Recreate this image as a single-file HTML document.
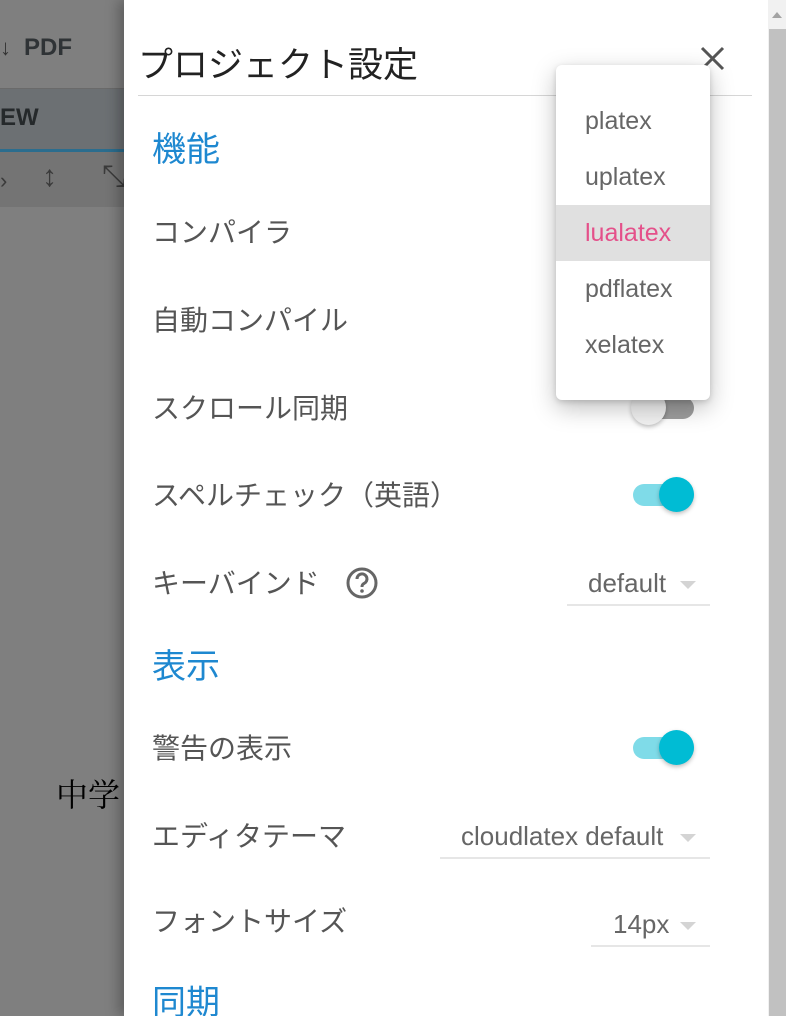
<!DOCTYPE html>
<html><head><meta charset="utf-8"><style>
*{margin:0;padding:0;box-sizing:border-box}
html,body{width:786px;height:1016px;overflow:hidden}
body{position:relative;background:#7f7f7f;font-family:"Liberation Sans","Noto Sans CJK JP",sans-serif}
.abs{position:absolute}
.panel{left:124px;top:0;width:644px;height:1016px;background:#fff;box-shadow:-6px 0 12px rgba(0,0,0,.25)}
.lbl{position:absolute;left:152px;font-size:28px;color:#555;line-height:30px;margin-top:2px}
.sec{position:absolute;left:152px;font-size:34px;color:#1e88d0;line-height:36px;margin-top:2px}
.tr{position:absolute;left:633px;width:61px;height:22px;border-radius:11px}
.kn{position:absolute;width:35px;height:35px;border-radius:50%;box-shadow:0 2px 4px rgba(0,0,0,.25)}
.sel{position:absolute;font-size:26px;color:#666;border-bottom:2px solid #e6e6e6;line-height:30px;height:38px}
.arr{position:absolute;right:14px;top:13px;width:0;height:0;border-left:8px solid transparent;border-right:8px solid transparent;border-top:8px solid #d4d4d4}
.mi{position:absolute;left:0;width:154px;height:56px;font-size:25px;color:#666;padding-left:29px;line-height:56px}
</style></head><body>
<div class="abs" style="left:0;top:0;width:124px;height:88px;background:#7f7f7f"></div>
<div class="abs" style="left:0;top:35px;font-size:22px;font-weight:bold;color:#333">↓</div>
<div class="abs" style="left:24px;top:34px;font-size:24px;font-weight:bold;color:#2f3336">PDF</div>
<div class="abs" style="left:0;top:88px;width:124px;height:62px;background:#6c7073;border-top:1px solid #6a6a6a"></div>
<div class="abs" style="left:0;top:104px;font-size:24px;font-weight:bold;color:#25292b">EW</div>
<div class="abs" style="left:0;top:149px;width:124px;height:3px;background:#2b6d8e"></div>
<div class="abs" style="left:0;top:152px;width:124px;height:55px;background:#747474"></div>
<div class="abs" style="left:0;top:168px;font-size:22px;color:#3a3a3a">›</div>
<div class="abs" style="left:42px;top:160px;font-size:30px;color:#3a3a3a">↕</div>
<div class="abs" style="left:102px;top:160px;font-size:30px;color:#3a3a3a">⤡</div>
<div class="abs" style="left:56px;top:770px;font-size:32px;color:#000;font-family:'Liberation Serif','Noto Serif CJK SC',serif">中学</div>

<div class="abs panel"></div>
<div class="abs" style="left:138px;top:37px;font-size:35px;color:#222">プロジェクト設定</div>
<svg class="abs" style="left:700px;top:46px" width="25" height="25" viewBox="0 0 25 25"><path d="M2 2L23 23M23 2L2 23" stroke="#555" stroke-width="3"/></svg>
<div class="abs" style="left:138px;top:95px;width:614px;height:1px;background:#d6d6d6"></div>

<div class="sec" style="top:130px">機能</div>
<div class="lbl" style="top:216px">コンパイラ</div>
<div class="lbl" style="top:304px">自動コンパイル</div>
<div class="lbl" style="top:392px">スクロール同期</div>
<div class="tr" style="top:397px;background:#9e9e9e"></div>
<div class="kn" style="left:631px;top:390px;background:#f1f1f1"></div>
<div class="lbl" style="top:479px">スペルチェック（英語）</div>
<div class="tr" style="top:484px;background:#7fdbe8"></div>
<div class="kn" style="left:659px;top:477px;background:#00bcd4"></div>
<div class="lbl" style="top:567px">キーバインド</div>
<svg class="abs" style="left:345px;top:566px" width="34" height="34" viewBox="0 0 34 34"><circle cx="17" cy="17" r="14" fill="none" stroke="#666" stroke-width="3"/><path d="M12 13a5 5 0 1 1 7 4.5c-1.5.8-2 1.5-2 3.5" fill="none" stroke="#666" stroke-width="3"/><circle cx="17" cy="25" r="1.8" fill="#666"/></svg>
<div class="sel" style="left:567px;top:568px;width:143px;padding-left:21px">default<div class="arr"></div></div>
<div class="sec" style="top:647px">表示</div>
<div class="lbl" style="top:732px">警告の表示</div>
<div class="tr" style="top:737px;background:#7fdbe8"></div>
<div class="kn" style="left:659px;top:730px;background:#00bcd4"></div>
<div class="lbl" style="top:820px">エディタテーマ</div>
<div class="sel" style="left:440px;top:821px;width:270px;padding-left:21px">cloudlatex default<div class="arr"></div></div>
<div class="lbl" style="top:905px">フォントサイズ</div>
<div class="sel" style="left:591px;top:909px;width:119px;padding-left:22px">14px<div class="arr"></div></div>
<div class="sec" style="top:983px">同期</div>

<div class="abs" style="left:556px;top:65px;width:154px;height:335px;background:#fff;border-radius:6px;box-shadow:0 8px 24px rgba(0,0,0,.25),0 2px 6px rgba(0,0,0,.15)">
<div class="mi" style="top:28px">platex</div>
<div class="mi" style="top:84px">uplatex</div>
<div class="mi" style="top:140px;background:#e0e0e0;color:#e4508a">lualatex</div>
<div class="mi" style="top:196px">pdflatex</div>
<div class="mi" style="top:252px">xelatex</div>
</div>

<div class="abs" style="left:768px;top:0;width:18px;height:1016px;background:#f1f1f1"></div>
<div class="abs" style="left:772px;top:12px;width:0;height:0;border-left:5px solid transparent;border-right:5px solid transparent;border-bottom:6px solid #a3a3a3"></div>
<div class="abs" style="left:769px;top:29px;width:17px;height:987px;background:#c1c1c1"></div>
</body></html>
